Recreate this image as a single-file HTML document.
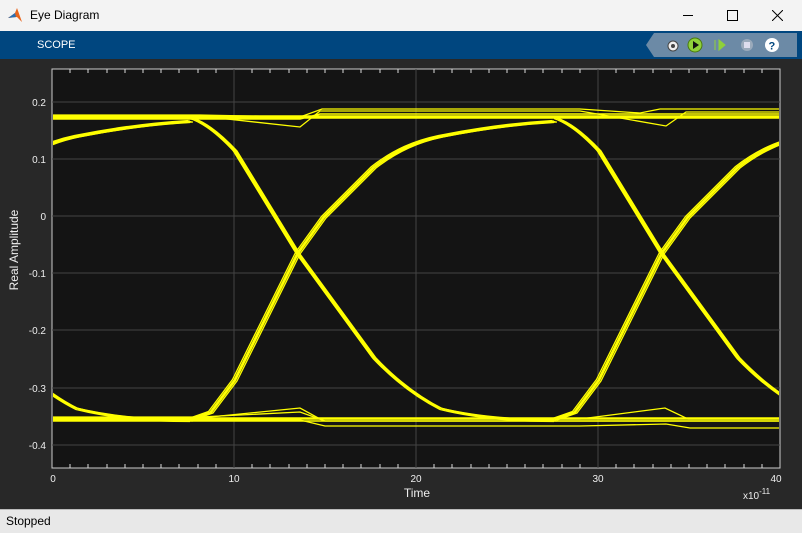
<!DOCTYPE html>
<html><head><meta charset="utf-8"><style>
body{margin:0;width:802px;height:532px;overflow:hidden;font-family:"Liberation Sans",sans-serif;background:#282828;position:relative}
.title{position:absolute;left:0;top:0;width:802px;height:31px;background:#f3f3f3;font-size:12px;color:#000}
.tb{position:absolute;left:0;top:31px;width:802px;height:28px;background:#00467f}
.status{position:absolute;left:0;top:509px;width:802px;height:23px;background:#e8e8e8;border-top:1px solid #bbb;font-size:12px}
</style></head><body>
<div class="title">
<svg style="position:absolute;left:8px;top:8px" width="14" height="14"><path d="M0 10 L7 5 L9 0 L14 14 L9 9 Z" fill="#e8641c"/><path d="M0 10 L7 5 L8 9Z" fill="#2a6fb3"/></svg>
<span style="position:absolute;left:30px;top:8px">Eye Diagram</span>
<span style="position:absolute;left:683px;top:15px;width:10px;border-top:1px solid #000"></span>
<span style="position:absolute;left:727px;top:10px;width:9px;height:9px;border:1px solid #000"></span>
<svg style="position:absolute;left:772px;top:10px" width="11" height="11"><path d="M0 0L11 11M11 0L0 11" stroke="#000"/></svg>
</div>
<div class="tb">
<span style="position:absolute;left:37px;top:8px;color:#fff;font-size:11px">SCOPE</span>
<svg style="position:absolute;left:640px;top:2px" width="160" height="24">
<path d="M14 0H157V24H14L6 12Z" fill="#6c8aa6"/>
<circle cx="33" cy="13" r="5" fill="#eee" stroke="#444"/><circle cx="33" cy="13" r="2" fill="#444"/>
<circle cx="55" cy="12" r="7" fill="#8fd13a" stroke="#4a7a10"/><path d="M53 8L59 12L53 16Z" fill="#111"/>
<path d="M75 7V17M79 7L85 12L79 17Z" fill="#8fd13a" stroke="#8fd13a"/>
<circle cx="107" cy="12" r="6" fill="#9aaabb"/><rect x="104" y="9" width="6" height="6" fill="#dde"/>
<circle cx="132" cy="12" r="7" fill="#fff"/><text x="128.5" y="16.5" font-size="11" font-weight="bold" fill="#00467f" font-family="Liberation Sans">?</text>
</svg>
</div>
<svg style="position:absolute;left:0;top:59px" width="802" height="450" font-family="Liberation Sans" font-size="10" fill="#eee">
<g transform="translate(0,-59)">
<rect x="52" y="69" width="728" height="399" fill="#141414" stroke="#ccc"/>
<g stroke="#444" stroke-width="1">
<path d="M234 69V468M416 69V468M598 69V468"/>
<path d="M52 102H780M52 159H780M52 216H780M52 273H780M52 330H780M52 388H780M52 445H780"/>
</g>
<g stroke="#ddd">
<path d="M70 468v-4M88 468v-4M107 468v-4M125 468v-4M143 468v-4M161 468v-4M179 468v-4M198 468v-4M216 468v-4M252 468v-4M270 468v-4M289 468v-4M307 468v-4M325 468v-4M343 468v-4M361 468v-4M380 468v-4M398 468v-4M434 468v-4M452 468v-4M471 468v-4M489 468v-4M507 468v-4M525 468v-4M543 468v-4M562 468v-4M580 468v-4M616 468v-4M634 468v-4M653 468v-4M671 468v-4M689 468v-4M707 468v-4M725 468v-4M744 468v-4M762 468v-4"/>
<path d="M70 69v4M88 69v4M107 69v4M125 69v4M143 69v4M161 69v4M179 69v4M198 69v4M216 69v4M252 69v4M270 69v4M289 69v4M307 69v4M325 69v4M343 69v4M361 69v4M380 69v4M398 69v4M434 69v4M452 69v4M471 69v4M489 69v4M507 69v4M525 69v4M543 69v4M562 69v4M580 69v4M616 69v4M634 69v4M653 69v4M671 69v4M689 69v4M707 69v4M725 69v4M744 69v4M762 69v4"/>
</g>
<defs>
<clipPath id="cp"><rect x="53" y="70" width="726" height="397"/></clipPath>
<g id="eye" fill="none" stroke="#ffff00" stroke-width="1.3" stroke-linejoin="round">
<path d="M190 419 L210 412 L234 380 L297 253 L323 217 L373 167 C395 150 416 141 440 136 C480 128 520 123 554 121"/>
<path d="M190 117 C205 122 220 135 234 150 L297 253 L373 357 C395 380 416 396 440 408 C480 418 520 420 554 420"/>
</g>
<g id="eye5"><use href="#eye"/><use href="#eye" transform="translate(1.5,0.5)"/><use href="#eye" transform="translate(-1.5,-0.5)"/><use href="#eye" transform="translate(3,1)"/><use href="#eye" transform="translate(0,1.5)"/></g>
</defs>
<g clip-path="url(#cp)">
<use href="#eye5" transform="translate(-364,0)"/><use href="#eye5"/><use href="#eye5" transform="translate(364,0)"/>
<g fill="none" stroke="#ffff00" stroke-width="1.3">
<path d="M52 115H200L300 117L322 109H580L640 113L660 109H780"/>
<path d="M52 116H200L300 127L320 111H580L666 126L686 112H780"/>
<path d="M52 117H780M52 118H780M52 116H780M52 119H300L320 114H780" stroke-width="1.5"/>
<path d="M52 418H200L300 408L320 419H580L665 408L688 419H780"/>
<path d="M52 420H300L325 426H580L666 424L690 428H780"/>
<path d="M52 417H200L300 412L325 421H780"/>
<path d="M52 419H780M52 421H780M52 418H780" stroke-width="1.5"/>
</g>
</g>
<g text-anchor="end" font-size="10">
<text x="46" y="106">0.2</text><text x="46" y="163">0.1</text><text x="46" y="220">0</text><text x="46" y="277">-0.1</text><text x="46" y="334">-0.2</text><text x="46" y="392">-0.3</text><text x="46" y="449">-0.4</text>
</g>
<g text-anchor="middle" font-size="10">
<text x="53" y="482">0</text><text x="234" y="482">10</text><text x="416" y="482">20</text><text x="598" y="482">30</text><text x="776" y="482">40</text>
</g>
<text x="417" y="497" text-anchor="middle" font-size="12">Time</text>
<text x="743" y="499" font-size="10">x10<tspan dy="-5" font-size="8">-11</tspan></text>
<text transform="translate(18,250) rotate(-90)" text-anchor="middle" font-size="12">Real Amplitude</text>
</g></svg>
<div class="status"><span style="position:absolute;left:6px;top:4px">Stopped</span></div>
</body></html>
